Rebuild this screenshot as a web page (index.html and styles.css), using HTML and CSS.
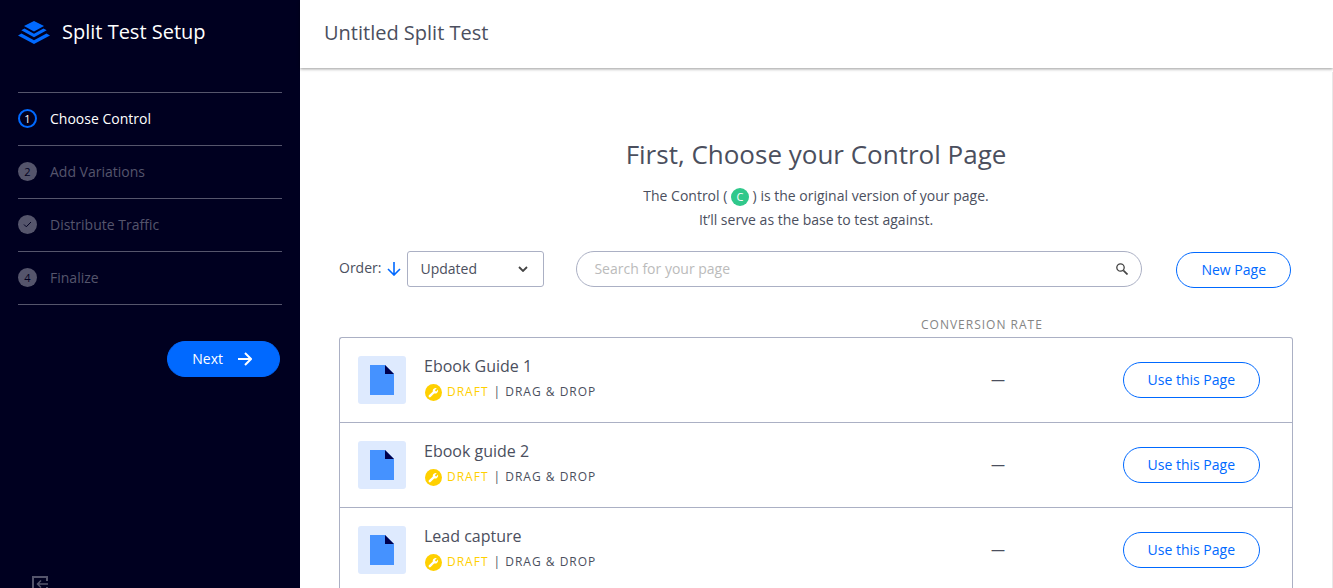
FILE: index.html
```html
<!DOCTYPE html>
<html lang="en">

<head>
    <meta charset="utf-8">
    <title>Split Test Setup</title>
    <link rel="stylesheet" href="styles.css">
</head>

<body>
    <svg class="sprite" aria-hidden="true">
        <symbol id="page" viewBox="0 0 24 30">
            <path fill="#4592ff" d="M0 0h15l9 9v21H0z" />
            <path fill="#00004c" d="M15 0l9 9h-9z" />
        </symbol>
        <symbol id="wrench" viewBox="0 0 17 17">
            <circle cx="8.500" cy="8.500" r="8.500" fill="#ffd000" />
            <path d="M4.800 12.200L9 8" stroke="#fff" stroke-width="2.400" stroke-linecap="round" />
            <path fill="#fff" d="M11.800 4.300L10 6.100l.3 1 1 .3 1.700-1.800a3 3 0 0 1-4 3.700A3 3 0 0 1 7.700 7a3 3 0 0 1 4.100-2.700z" />
        </symbol>
    </svg>
    <div class="app">
        <aside class="sidebar">
            <div class="brand">
                <svg class="logo" viewBox="0 0 32 23" fill="#0069ff" aria-hidden="true">
                    <path d="M16 0l10 5-10 5.500L6 5z" />
                    <path d="M6.500 7.500L16 12.800l9.500-5.300 3.200 1.700L16 16.300 3.300 9.200z" />
                    <path d="M3.500 12.500L16 19.300l12.500-6.800 3.500 1.900L16 23 0 14.400z" />
                </svg>
                <h1>Split Test Setup</h1>
            </div>
            <ol class="steps">
                <li class="step active"><span class="num">1</span>Choose Control</li>
                <li class="step"><span class="num">2</span>Add Variations</li>
                <li class="step">
                    <span class="num">
                        <svg width="9" height="7" viewBox="0 0 9 7" fill="none" stroke="#000020"><path d="M1 3.500l2.300 2.300L8 1" /></svg>
                    </span>Distribute Traffic
                </li>
                <li class="step"><span class="num">4</span>Finalize</li>
            </ol>
            <button type="button" class="btn next">Next
                <svg width="14" height="14" viewBox="0 0 14 14" fill="none" stroke="#fff" stroke-width="2"><path d="M0 7h13M7 1l6 6-6 6" /></svg>
            </button>
            <a href="#" class="exit" aria-label="Exit">
                <svg width="16" height="16" viewBox="0 0 16 16" fill="none" stroke="#55556c" stroke-width="2"><path d="M15 5V1H1v14h14v-4" /><path stroke-width="1.500" d="M16 8H6M9 4.500L5.500 8 9 11.500" /></svg>
            </a>
        </aside>

        <main class="main">
            <header class="topbar">
                <h2>Untitled Split Test</h2>
            </header>
            <section class="content">
                <div class="intro">
                    <h3>First, Choose your Control Page</h3>
                    <p>The Control ( <span class="control">C</span> ) is the original version of your page.<br>It’ll serve as the base to test against.</p>
                </div>
                <div class="filters">
                    <label for="order">Order:</label>
                    <button type="button" class="direction" aria-label="Change direction">
                        <svg width="14" height="14" viewBox="0 0 14 14" fill="none" stroke="#0069ff" stroke-width="1.600"><path d="M7 0v13M1 7l6 6 6-6" /></svg>
                    </button>
                    <div class="select">
                        <select id="order">
                            <option>Updated</option>
                        </select>
                        <svg width="10" height="6" viewBox="0 0 10 6" fill="none" stroke="#444" stroke-width="1.800"><path d="M1 1l4 4 4-4" /></svg>
                    </div>
                    <div class="search">
                        <input type="search" placeholder="Search for your page" aria-label="Search for your page">
                        <svg width="12" height="12" viewBox="0 0 12 12" fill="none" stroke="#444"><circle cx="4.500" cy="4.500" r="3.700" stroke-width="1.300" /><path stroke-width="1.700" d="M7.300 7.300l4.200 4.200" /></svg>
                    </div>
                    <button type="button" class="btn outline">New Page</button>
                </div>
                <table class="pages">
                    <thead>
                        <tr>
                            <th class="name"></th>
                            <th class="rate">Conversion rate</th>
                            <th class="action"></th>
                        </tr>
                    </thead>
                    <tbody>
                        <tr>
                            <td>
                                <div class="page">
                                    <span class="thumb"><svg width="24" height="30"><use href="#page" /></svg></span>
                                    <div>
                                        <div class="title">Ebook Guide 1</div>
                                        <div class="meta"><svg width="17" height="17"><use href="#wrench" /></svg><span class="draft">Draft</span> <span>| Drag &amp; Drop</span></div>
                                    </div>
                                </div>
                            </td>
                            <td class="value">—</td>
                            <td><button type="button" class="btn outline">Use this Page</button></td>
                        </tr>
                        <tr>
                            <td>
                                <div class="page">
                                    <span class="thumb"><svg width="24" height="30"><use href="#page" /></svg></span>
                                    <div>
                                        <div class="title">Ebook guide 2</div>
                                        <div class="meta"><svg width="17" height="17"><use href="#wrench" /></svg><span class="draft">Draft</span> <span>| Drag &amp; Drop</span></div>
                                    </div>
                                </div>
                            </td>
                            <td class="value">—</td>
                            <td><button type="button" class="btn outline">Use this Page</button></td>
                        </tr>
                        <tr>
                            <td>
                                <div class="page">
                                    <span class="thumb"><svg width="24" height="30"><use href="#page" /></svg></span>
                                    <div>
                                        <div class="title">Lead capture</div>
                                        <div class="meta"><svg width="17" height="17"><use href="#wrench" /></svg><span class="draft">Draft</span> <span>| Drag &amp; Drop</span></div>
                                    </div>
                                </div>
                            </td>
                            <td class="value">—</td>
                            <td><button type="button" class="btn outline">Use this Page</button></td>
                        </tr>
                    </tbody>
                </table>
            </section>
        </main>
    </div>
</body>

</html>
```

FILE: styles.css
```css
html {
    --blue: #0069ff;
    --navy: #000020;
    --text: #4b4f5e;
    --muted: #55556c;
    --line: #abb0c4;
}

* {
    box-sizing: border-box;
}

body {
    margin: 0;
    font: 14px/24px "Open Sans", sans-serif;
    color: var(--text);
}

h1,
h2,
h3,
p,
ol {
    margin: 0;
    padding: 0;
    font-weight: 400;
}

button,
input,
select {
    font: inherit;
    color: inherit;
}

svg {
    flex: none;
}

.sprite {
    display: none;
}

.app {
    display: flex;
    height: 100vh;
    overflow: hidden;
}

/* sidebar */
.sidebar {
    display: flex;
    flex-direction: column;
    flex: 0 0 300px;
    padding: 0 18px;
    overflow: hidden;
    background: var(--navy);
    color: #fff;
}

.brand {
    display: flex;
    align-items: center;
    gap: 12px;
    flex: none;
    height: 64px;
    margin-bottom: 28px;
}

.logo {
    width: 32px;
    height: 23px;
}

.brand h1 {
    font-size: 20px;
}

.steps {
    list-style: none;
    border-top: 1px solid var(--muted);
}

.step {
    display: flex;
    align-items: center;
    gap: 13px;
    height: 53px;
    border-bottom: 1px solid var(--muted);
    color: var(--muted);
}

.step.active {
    color: #fff;
}

.num {
    display: flex;
    align-items: center;
    justify-content: center;
    width: 19px;
    height: 19px;
    margin-bottom: 1px;
    border-radius: 50%;
    background: var(--muted);
    color: var(--navy);
    font-size: 11px;
}

.active .num {
    border: 2px solid var(--blue);
    background: none;
    color: #fff;
}

.btn {
    height: 36px;
    padding: 0 24px;
    border: 1px solid var(--blue);
    border-radius: 18px;
    white-space: nowrap;
}

.next {
    display: flex;
    align-items: center;
    align-self: flex-end;
    gap: 15px;
    flex: none;
    margin: 36px 2px 0 0;
    padding-right: 27px;
    background: var(--blue);
}

.exit {
    flex: none;
    margin: 199px 14px 0;
}

.exit svg {
    display: block;
}

/* main */
.main {
    display: flex;
    flex-direction: column;
    flex: 1;
    min-width: 0;
}

.topbar {
    display: flex;
    align-items: center;
    flex: none;
    height: 68px;
    padding: 0 24px 2px;
    box-shadow: 0 1px 3px rgba(0, 0, 0, 0.4);
}

.topbar h2 {
    font-size: 20px;
}

.content {
    flex: none;
    margin-top: 4px;
    padding: 64px 39px 0;
    border-right: 1px solid #e8e8e8;
}

.intro {
    text-align: center;
}

.intro h3 {
    margin-bottom: 12px;
    font-size: 26px;
    line-height: 36px;
}

.control {
    display: inline-block;
    width: 18px;
    height: 18px;
    border-radius: 50%;
    background: #30c88b;
    color: #fff;
    font-size: 11px;
    line-height: 18px;
}

.filters {
    display: flex;
    align-items: center;
    margin-top: 18px;
}

.filters label {
    padding-bottom: 2px;
}

.direction {
    display: flex;
    padding: 0;
    margin: 0 6px;
    border: 0;
    background: none;
}

.select,
.search {
    display: grid;
    align-items: center;
}

.select > *,
.search > * {
    grid-area: 1 / 1;
}

.select svg,
.search svg {
    justify-self: end;
    margin-right: 16px;
    pointer-events: none;
}

.select select {
    appearance: none;
    width: 137px;
    height: 36px;
    padding: 0 12px;
    border: 1px solid var(--line);
    border-radius: 3px;
    background: #fff;
}

.search {
    flex: 1;
    margin: 0 34px 0 32px;
}

.search input {
    appearance: none;
    width: 100%;
    height: 36px;
    padding: 0 17px 2px;
    border: 1px solid var(--line);
    border-radius: 18px;
}

.search input::placeholder {
    color: #bbb;
}

.search svg {
    margin-right: 14px;
}

.outline {
    background: #fff;
    color: var(--blue);
}

.filters .outline {
    margin: 2px 2px 0 0;
}

/* pages */
.pages {
    width: 100%;
    margin-top: 24px;
    border-spacing: 0;
    table-layout: fixed;
}

.pages th {
    height: 25px;
    padding: 0;
    color: #858585;
    font-size: 12px;
    font-weight: 400;
    letter-spacing: 1px;
    text-align: left;
    text-transform: uppercase;
}

.rate {
    width: 154px;
}

.action {
    width: 218px;
}

.pages td {
    height: 85px;
    padding: 0;
    border-bottom: 1px solid var(--line);
}

.pages tr:first-child td {
    height: 86px;
    border-top: 1px solid var(--line);
}

.pages td:first-child {
    padding-left: 18px;
    border-left: 1px solid var(--line);
}

.pages td:last-child {
    padding-right: 32px;
    border-right: 1px solid var(--line);
    text-align: right;
}

.pages tr:first-child td:first-child {
    border-top-left-radius: 3px;
}

.pages tr:first-child td:last-child {
    border-top-right-radius: 3px;
}

.pages .value {
    text-align: center;
}

.page {
    display: flex;
    align-items: center;
    gap: 18px;
}

.thumb {
    display: flex;
    align-items: center;
    justify-content: center;
    width: 48px;
    height: 48px;
    border-radius: 3px;
    background: #deeafe;
}

.title {
    margin-bottom: 2px;
    font-size: 16px;
}

.meta {
    display: flex;
    align-items: center;
    gap: 4px;
    padding: 0 0 2px 1px;
    font-size: 12px;
    letter-spacing: 1px;
    text-transform: uppercase;
}

.draft {
    padding: 0 1px;
    color: #ffd000;
}
```
